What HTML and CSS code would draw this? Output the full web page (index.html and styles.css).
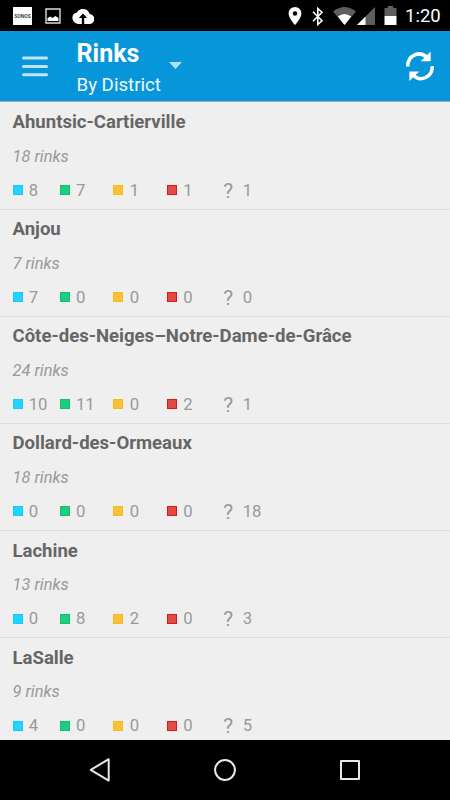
FILE: index.html
```html
<!DOCTYPE html>
<html lang="en">
<head>
<meta charset="utf-8">
<title>Rinks</title>
<link rel="stylesheet" href="styles.css">
</head>
<body>
<div class="screen">
  <div class="status">
    <span class="sonos">SONOS</span>
    <svg class="photo" width="16" height="16" viewBox="0 0 16 16"><path d="M1 1h14v14H1z" fill="none" stroke="#ddd" stroke-width="1.4"/><path d="M2.500 13V10l3-1.500 2 1.500 3-2 3 2v3z" fill="#fff"/></svg>
    <svg class="cloud" width="22" height="16" viewBox="0 0 22 16"><path fill="#fff" fill-rule="evenodd" d="M17.600 6A7 7 0 0 0 4.800 4.400 5.600 5.600 0 0 0 .4 10 6 6 0 0 0 6 16h11a5 5 0 0 0 .6-10zM9.800 16v-6H6.800L11 5.500l4.200 4.500h-3v6z"/></svg>
    <span class="spacer"></span>
    <svg class="pin" width="14" height="18" viewBox="0 0 14 18"><path fill="#fff" fill-rule="evenodd" d="M7 0a6.400 6.400 0 0 0-6.400 6.400C.6 11 7 18 7 18s6.400-7 6.400-11.600A6.400 6.400 0 0 0 7 0zm0 4.200a2.300 2.300 0 1 1 0 4.600 2.300 2.300 0 0 1 0-4.600z"/></svg>
    <svg class="bluetooth" width="12" height="19" viewBox="0 0 12 19"><path fill="none" stroke="#fff" stroke-width="1.600" d="M1 4.800l9 9L5.800 17.500v-16L10 5.200l-9 9"/></svg>
    <svg class="wifi" width="23" height="18" viewBox="0 0 23 18"><path fill="#5e5e5e" d="M0 4.500Q11.500-4.500 23 4.500L11.500 18z"/><path fill="#fff" d="M4.800 9.500Q11.500 4.500 18.200 9.500L11.500 18z"/></svg>
    <svg class="signal" width="18" height="18" viewBox="0 0 18 18"><path fill="#5e5e5e" d="M0 18L18 0v18z"/><path fill="#fff" d="M0 18L8.500 9.500V18z"/></svg>
    <svg class="battery" width="13" height="19" viewBox="0 0 13 19"><path fill="#5e5e5e" d="M.5 2h3.200V0h5.600v2h3.200v8H.5z"/><path fill="#fff" d="M.5 10h12v9H.5z"/></svg>
    <span class="clock">1:20</span>
  </div>
  <header class="bar">
    <svg class="menu" width="26" height="21" viewBox="0 0 26 21"><path stroke="#c0e4f6" stroke-width="3" stroke-linecap="round" d="M1.500 2h23M1.500 10.400h23M1.500 18.700h23"/></svg>
    <div class="heading"><h1>Rinks</h1><p>By District</p></div>
    <svg class="caret" width="13" height="7" viewBox="0 0 13 7"><path fill="#b4dff4" d="M0 0h13L6.500 7z"/></svg>
    <span class="spacer"></span>
    <svg class="refresh" width="28" height="30" viewBox="0 0 28 30"><g id="arc"><path fill="none" stroke="#fff" stroke-width="3.500" d="M1.800 15.500C1.300 4.500 13.500-.7 20.500 6"/><path fill="#fff" d="M24.700.5v9.700h-10z"/></g><use href="#arc" transform="rotate(180 14 15.300)"/></svg>
  </header>
  <main class="list">
    <section class="row"><h2>Ahuntsic-Cartierville</h2><p class="count">18 rinks</p><div class="stats"><span class="blue">8</span><span class="green">7</span><span class="yellow">1</span><span class="red">1</span><span class="unknown"><b>?</b>1</span></div></section>
    <section class="row"><h2>Anjou</h2><p class="count">7 rinks</p><div class="stats"><span class="blue">7</span><span class="green">0</span><span class="yellow">0</span><span class="red">0</span><span class="unknown"><b>?</b>0</span></div></section>
    <section class="row"><h2>Côte-des-Neiges–Notre-Dame-de-Grâce</h2><p class="count">24 rinks</p><div class="stats"><span class="blue">10</span><span class="green">11</span><span class="yellow">0</span><span class="red">2</span><span class="unknown"><b>?</b>1</span></div></section>
    <section class="row"><h2>Dollard-des-Ormeaux</h2><p class="count">18 rinks</p><div class="stats"><span class="blue">0</span><span class="green">0</span><span class="yellow">0</span><span class="red">0</span><span class="unknown"><b>?</b>18</span></div></section>
    <section class="row"><h2>Lachine</h2><p class="count">13 rinks</p><div class="stats"><span class="blue">0</span><span class="green">8</span><span class="yellow">2</span><span class="red">0</span><span class="unknown"><b>?</b>3</span></div></section>
    <section class="row"><h2>LaSalle</h2><p class="count">9 rinks</p><div class="stats"><span class="blue">4</span><span class="green">0</span><span class="yellow">0</span><span class="red">0</span><span class="unknown"><b>?</b>5</span></div></section>
  </main>
  <nav class="nav">
    <svg width="24" height="26" viewBox="0 0 24 26"><path d="M20.700 2.200v21.400L2.700 12.900z"/></svg>
    <svg width="24" height="26" viewBox="0 0 24 26"><circle cx="12" cy="13" r="9.900"/></svg>
    <svg width="24" height="26" viewBox="0 0 24 26"><path d="M3 4h18v18H3z"/></svg>
  </nav>
</div>
</body>
</html>
```
FILE: styles.css
```css
*, *::before { box-sizing: border-box; }
body { margin: 0; font-family: Roboto, sans-serif; }
h1, h2, p { margin: 0; }
svg { display: block; flex: none; }
.screen { width: 450px; height: 800px; display: flex; flex-direction: column; overflow: hidden; background: #efefef; }
.spacer { flex: 1; }

.status { height: 31px; flex: none; display: flex; align-items: flex-start; background: #000; padding: 7px 10px 0 13px; }
.sonos { width: 19px; height: 18px; background: #fff; color: #222; font-size: 5px; font-weight: 500; line-height: 18px; text-align: center; }
.photo { margin: 1px 0 0 13px; }
.cloud { margin: 1px 0 0 11px; }
.bluetooth { margin: 0 0 0 10px; }
.wifi { margin-left: 9px; }
.signal { margin-left: 1px; }
.battery { margin-left: 9px; margin-top: -1px; }
.clock { width: 35px; margin-left: 8px; color: #fff; font-size: 18.500px; line-height: 19px; font-weight: 400; white-space: nowrap; }

.bar { height: 71px; flex: none; display: flex; align-items: flex-start; background: #0796da; border-bottom: 1px solid #a0a9ad; padding: 0 16px 0 22px; }
.menu { margin-top: 25px; }
.heading { margin-left: 28.500px; width: 92.500px; color: #fff; }
.heading h1 { font-size: 25px; font-weight: 700; line-height: 30px; padding-top: 8px; height: 38px; }
.heading p { font-size: 18.700px; line-height: 33px; color: #eef8fd; }
.caret { margin-top: 31px; }
.refresh { margin-top: 20px; }

.list { height: 638px; flex: none; overflow: hidden; }
.row { height: 107.100px; border-bottom: 1px solid #dedede; padding: 7.700px 12.500px 0; }
.row:first-child { height: 107.600px; padding-top: 8.200px; }
.row h2 { font-size: 18.560px; line-height: 24px; font-weight: 700; color: #666; white-space: nowrap; }
.count { font-size: 16.400px; line-height: 20px; margin-top: 12.500px; font-style: italic; font-weight: 400; color: #999; }
.stats { display: grid; grid-template-columns: 47.300px 53.700px 53.700px 56px auto; margin-top: 14px; height: 20px; font-size: 16.700px; line-height: 20px; color: #999; }
.stats span { display: flex; align-items: center; }
.stats span::before { content: ""; width: 10px; height: 10px; margin: -1px 6.200px 0 0; border: 1px solid; flex: none; }
.stats .blue::before { background: #22d4ff; border-color: #16caf8; }
.stats .green::before { background: #20cc80; border-color: #10c070; }
.stats .yellow::before { background: #f8c237; border-color: #f5ba1b; }
.stats .red::before { background: #e04b45; border-color: #d81a16; }
.stats .unknown::before { display: none; }
.stats b { width: 19.500px; font-size: 21px; font-weight: 400; color: #999; }

.nav { height: 60px; flex: none; display: flex; align-items: center; justify-content: space-between; background: #000; padding: 0 88px; }
.nav svg { fill: none; stroke: #e8e8e8; stroke-width: 2; stroke-linejoin: round; }
```
